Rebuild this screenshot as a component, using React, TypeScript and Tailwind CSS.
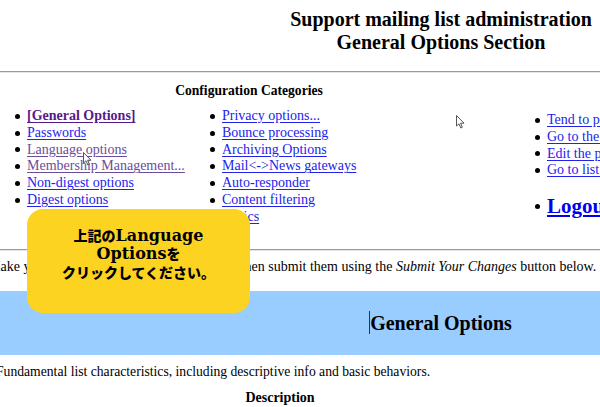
import type { ReactNode } from "react";

type Item = { label: string; tone?: "link" | "visited" | "current" };

const categoriesLeft: Item[] = [
  { label: "[General Options]", tone: "current" },
  { label: "Passwords" },
  { label: "Language options", tone: "visited" },
  { label: "Membership Management...", tone: "visited" },
  { label: "Non-digest options" },
  { label: "Digest options" },
];

const categoriesMid: Item[] = [
  { label: "Privacy options..." },
  { label: "Bounce processing" },
  { label: "Archiving Options" },
  { label: "Mail<->News gateways" },
  { label: "Auto-responder" },
  { label: "Content filtering" },
  { label: "Topics" },
];

const otherLinks: Item[] = [
  { label: "Tend to pending moderator requests" },
  { label: "Go to the general list information page" },
  { label: "Edit the public HTML pages and text files" },
  { label: "Go to list archives" },
];

const toneClass = {
  link: "text-[#2222ee] decoration-[#2222ee]",
  visited: "text-[#6a4c9c] decoration-[#6a4c9c]",
  current: "text-[#551a8b] decoration-[#551a8b] font-bold",
};

function Bullet({ children }: { children: ReactNode }) {
  return (
    <li className="flex items-center">
      <span className="mr-[7px] h-[5px] w-[5px] shrink-0 rounded-full bg-black" />
      {children}
    </li>
  );
}

function LinkList({ items }: { items: Item[] }) {
  return (
    <ul className="text-[14px] leading-[16.8px]">
      {items.map(({ label, tone = "link" }) => (
        <Bullet key={label}>
          <a className={`whitespace-nowrap underline underline-offset-[2px] ${toneClass[tone]}`}>
            {label}
          </a>
        </Bullet>
      ))}
    </ul>
  );
}

function Cursor({ className }: { className: string }) {
  return (
    <svg className={`absolute ${className}`} width="9" height="14" viewBox="0 0 9 14">
      <path
        d="M0.5 0.5 L0.5 11 L3 8.8 L4.8 13 L6.3 12.3 L4.6 8.2 L8 8.2 Z"
        fill="white"
        stroke="#444"
        strokeWidth="0.9"
        strokeLinejoin="round"
      />
    </svg>
  );
}

export default function App() {
  return (
    <div
      className="relative h-[407px] w-[600px] overflow-hidden bg-white text-black"
      style={{ fontFamily: '"Liberation Serif", "Times New Roman", serif' }}
    >
      <div className="w-[882px]">
        <header className="pt-[8px] text-center text-[20px] font-bold leading-[23px]">
          <h1>Support mailing list administration</h1>
          <h1>General Options Section</h1>
        </header>

        <hr className="mt-[17px] border-t border-b border-t-[#9a9a9a] border-b-[#e6e6e6]" />

        <div className="mt-[10px] w-[498px] text-center text-[13.6px] font-bold leading-[16px]">
          Configuration Categories
        </div>

        <div className="mt-[9px] flex h-[141px]">
          <div className="ml-[15px] w-[195px]">
            <LinkList items={categoriesLeft} />
          </div>
          <div className="w-[325px]">
            <LinkList items={categoriesMid} />
          </div>
          <div className="pt-[4px]">
            <LinkList items={otherLinks} />
            <ul className="mt-[15px]">
              <Bullet>
                <a className="text-[21px] font-bold leading-[24px] text-[#0000ee] underline">
                  Logout
                </a>
              </Bullet>
            </ul>
          </div>
        </div>

        <hr className="border-t border-b border-t-[#9a9a9a] border-b-[#e6e6e6]" />

        <p className="-ml-[12px] mt-[8px] whitespace-nowrap text-[14px] leading-[16px]">
          Make your changes in the following section, then submit them using the{" "}
          <em>Submit Your Changes</em> button below.
        </p>

        <div className="mt-[16px] flex h-[64px] items-center justify-center bg-[#99ccff]">
          <span className="relative text-[20px] font-bold leading-[24px]">
            <span className="absolute -left-[1px] top-[0px] h-[23px] w-px bg-[#333]" />
            General Options
          </span>
        </div>

        <p className="-ml-[4px] mt-[9px] whitespace-nowrap text-[13.65px] leading-[16px]">
          Fundamental list characteristics, including descriptive info and basic behaviors.
        </p>

        <div className="mt-[10px] w-[560px] text-center text-[14px] font-bold leading-[16px]">
          Description
        </div>
      </div>

      <Cursor className="left-[83px] top-[152px]" />
      <Cursor className="left-[456px] top-[115px]" />

      <div
        className="absolute left-[27px] top-[209px] flex h-[104px] w-[223px] items-center justify-center rounded-[16px] bg-[#fdd322] pb-[13px] text-center text-[16px] font-bold leading-[17.5px] text-black"
        style={{ fontFamily: '"DejaVu Serif", "Noto Sans CJK JP", serif' }}
      >
        <p>
          <span className="text-[14px] font-black">上記の</span>Language
          <br />
          Options<span className="text-[14px] font-black">を</span>
          <br />
          <span className="text-[14px] font-black">クリックしてください。</span>
        </p>
      </div>
    </div>
  );
}
